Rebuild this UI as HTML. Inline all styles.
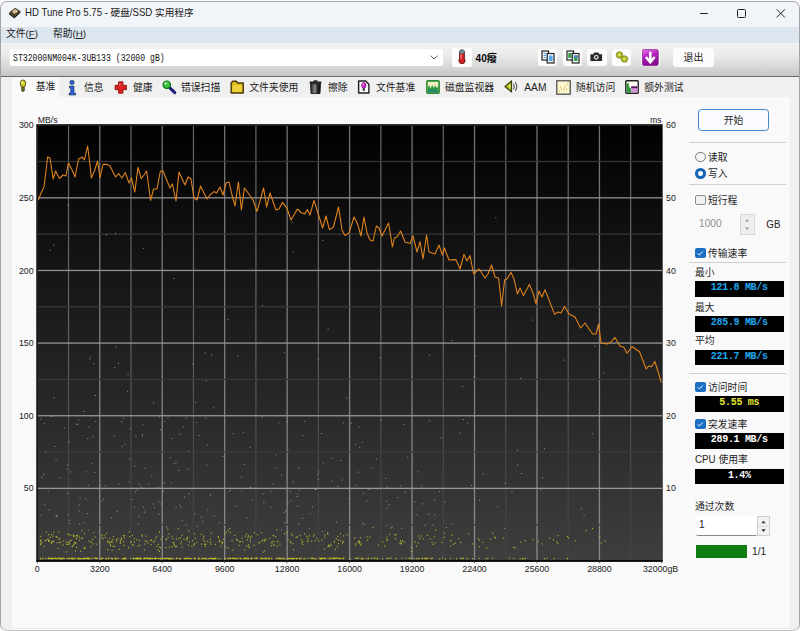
<!DOCTYPE html>
<html lang="zh-CN">
<head>
<meta charset="utf-8">
<title>HD Tune Pro 5.75 - 硬盘/SSD 实用程序</title>
<style>
html,body{margin:0;padding:0;}
body{width:800px;height:631px;overflow:hidden;background:#fdfdfd;position:relative;
 font-family:"Liberation Sans","Noto Sans CJK SC",sans-serif;font-size:10px;color:#1a1a1a;}
.abs{position:absolute;}
#win{position:absolute;left:0px;top:1px;width:798px;height:628px;border:1px solid #a4a4a4;border-bottom-color:#c2c2c2;border-radius:7px;overflow:hidden;background:#f0f0f0;}
#titlebar{position:absolute;left:0;top:0;width:798px;height:25px;background:#f1f4f9;}
#menubar{position:absolute;left:0;top:25px;width:798px;height:16px;background:#dde5ef;}
#toolbar{position:absolute;left:0;top:41px;width:798px;height:33px;background:linear-gradient(#f2f2f3 0%,#ebebec 35%,#d6d6d6 75%,#c4c4c4 100%);}
#tbline{position:absolute;left:0;top:73.6px;width:798px;height:1.300px;background:#6c6c6c;}
#tabarea{position:absolute;left:0;top:75px;width:798px;height:552px;background:#f0f0f0;}
#page{position:absolute;left:11px;top:95px;width:778px;height:531px;background:#f9f9fa;border-bottom:1px solid #e9e9e9;}
#pgb{position:absolute;left:11px;top:627px;width:778px;height:2px;background:#fbfbfb;}
#tabstrip{position:absolute;left:11px;top:78px;width:778px;height:18px;background:#f0f0f0;}
#seltab{position:absolute;left:11px;top:75.5px;width:47px;height:21px;background:#f9f9fa;}
.t{position:absolute;white-space:nowrap;line-height:12px;height:12px;}
.title{font-size:9.65px;left:25px;top:6.5px;color:#1b1b1b;}
.menu{font-size:9.750px;top:28px;}
.tab{font-size:9.8px;top:82px;color:#222;}
.lbl{font-size:9.8px;color:#1f1f1f;margin-top:0.6px;}
.lat{display:inline-block;transform:scaleY(1.16);transform-origin:50% 78%;}
.btn{position:absolute;background:#fcfcfd;border-radius:2.5px;}
.sep{position:absolute;left:689px;width:97px;height:1px;background:#cfcfcf;}
.blk{position:absolute;left:695px;width:88.5px;height:15.5px;background:#000;color:#fff;text-align:center;
 font-family:"Liberation Mono","Noto Sans CJK SC",monospace;font-weight:bold;font-size:10px;letter-spacing:-0.32px;line-height:13px;white-space:pre;}
.cb{position:absolute;left:695px;width:10.500px;height:10.200px;border-radius:2px;box-sizing:border-box;}
.cb.on{background:#1b6ec2;}
.cb.off{border:1px solid #8c8c8c;background:#f1f1f1;}
.rad{position:absolute;left:695px;width:10.700px;height:10.700px;margin-top:-0.300px;border-radius:50%;box-sizing:border-box;}
</style>
</head>
<body>
<div id="win">
  <div id="titlebar"></div>
  <div id="menubar"></div>
  <div id="toolbar"></div>
  <div id="tbline"></div>
  <div id="tabarea"></div>
  <div id="tabstrip"></div>
  <div id="seltab"></div>
  <div id="page"></div>
  <div id="pgb"></div>
</div>

<!-- title -->
<svg class="abs" style="left:7.500px;top:6.500px" width="13.500" height="12" viewBox="0 0 15 14">
  <polygon points="1,6.500 8,0.800 14,4.800 7,11.500" fill="#4a3c26"/>
  <polygon points="1,6.500 7,11.500 7,13.500 1,8.500" fill="#16120c"/>
  <polygon points="7,11.500 14,4.800 14,6.800 7,13.500" fill="#0c0a06"/>
  <polygon points="4,5.800 8.200,2.200 11.800,4.600 7.400,8.600" fill="#b49a6a"/>
  <ellipse cx="7.800" cy="4.900" rx="2.300" ry="1.900" fill="#f0dfb8"/>
  <circle cx="7.800" cy="4.900" r="0.700" fill="#6b5a3a"/>
</svg>
<div class="t title"><span class="lat">HD Tune Pro 5.75 -</span> 硬盘<span class="lat">/SSD</span> 实用程序</div>
<svg class="abs" style="left:690px;top:2px" width="108" height="24" viewBox="0 0 108 24" fill="none" stroke="#222" stroke-width="1">
  <path d="M10 11.5h7.800"/>
  <rect x="47.5" y="7.5" width="8" height="8" rx="1"/>
  <path d="M86.7 7.3l8.2 8.2M94.9 7.3l-8.2 8.2"/>
</svg>

<!-- menu -->
<div class="t menu" style="left:6px">文件(<u>F</u>)</div>
<div class="t menu" style="left:53px">帮助(<u>H</u>)</div>

<!-- toolbar -->
<div class="btn" style="left:10px;top:49px;width:433px;height:17px;background:#fff;border-radius:2px;"></div>
<div class="t" style="left:13px;top:51.5px;font-family:'Liberation Mono','Noto Sans CJK SC',monospace;font-size:10.4px;transform:scaleX(0.785);transform-origin:0 0;color:#111;">ST32000NM004K-3UB133 (32000 gB)</div>
<svg class="abs" style="left:429.3px;top:54px" width="10" height="7" viewBox="0 0 10 7"><path d="M1.5 1.5l3.5 3.5 3.5-3.5" fill="none" stroke="#666" stroke-width="1"/></svg>

<div class="btn" style="left:451.8px;top:47.5px;width:20.5px;height:19px;"></div>
<svg class="abs" style="left:455.5px;top:49px" width="12" height="16" viewBox="0 0 12 16">
  <rect x="3.6" y="1" width="4.8" height="10" rx="2.2" fill="#d42020" stroke="#5a1414" stroke-width="0.9"/>
  <circle cx="6" cy="11.6" r="3.1" fill="#d42020" stroke="#5a1414" stroke-width="0.9"/>
  <rect x="4.6" y="2" width="2.8" height="9" fill="#d42020"/>
  <rect x="4.6" y="2" width="1.1" height="8" fill="#f08a8a"/>
  <path d="M3.600 4.200v-1.200a2.400 2.200 0 0 1 4.800 0v1.200z" fill="#6f98a4" stroke="#3a4a50" stroke-width="0.600"/>
</svg>
<div class="t" style="left:475.600px;top:52.600px;font-size:10.100px;font-weight:bold;color:#0a0a0a;">40癈</div>

<div class="btn" style="left:537.5px;top:48.5px;width:19.5px;height:17px;"></div>
<div class="btn" style="left:562.5px;top:48.5px;width:19.5px;height:17px;"></div>
<div class="btn" style="left:587px;top:48.5px;width:19.5px;height:17px;"></div>
<div class="btn" style="left:611.5px;top:48.5px;width:19.5px;height:17px;"></div>
<div class="btn" style="left:640.5px;top:48.5px;width:19.5px;height:17px;"></div>
<!-- copy icons -->
<svg class="abs" style="left:540.500px;top:49.500px" width="14" height="14" viewBox="0 0 14 14">
  <rect x="1" y="1" width="6.500" height="9" fill="#f4f8ff" stroke="#222" stroke-width="1.200"/>
  <rect x="6.200" y="3.500" width="6.800" height="9.500" fill="#f4f8ff" stroke="#222" stroke-width="1.200"/>
  <path d="M2.500 3.500h3M2.500 5.500h3M2.500 7.500h3" stroke="#5aa0e6" stroke-width="1"/>
  <rect x="7.800" y="5.500" width="3.800" height="5.500" fill="#5aa6ee"/>
</svg>
<svg class="abs" style="left:565.500px;top:49.500px" width="14" height="14" viewBox="0 0 14 14">
  <rect x="1" y="1" width="6.500" height="9" fill="#f4f8ff" stroke="#222" stroke-width="1.200"/>
  <rect x="6.200" y="3.500" width="6.800" height="9.500" fill="#f4f8ff" stroke="#222" stroke-width="1.200"/>
  <rect x="2.300" y="3" width="3.200" height="5" fill="#3c9a4a"/>
  <rect x="7.800" y="5.500" width="3.800" height="5.500" fill="#3ca04a"/>
  <rect x="7.800" y="5.500" width="3.800" height="2" fill="#4a80d8"/>
</svg>
<svg class="abs" style="left:590.300px;top:52px" width="12.500" height="9.200" viewBox="0 0 15 11">
  <path d="M0.500 2.800h3.300l1.200-2.200h5l1.200 2.200h3.300v8h-14z" fill="#2a2a2a"/>
  <circle cx="7.500" cy="6.400" r="2.800" fill="#f4f4f4"/>
  <circle cx="7.500" cy="6.400" r="1.500" fill="#3a3a3a"/>
</svg>
<svg class="abs" style="left:615px;top:50.500px" width="14" height="12" viewBox="0 0 14 12">
  <path d="M1.500 3.200l2.200-2 8.800 7.800-2.200 2z" fill="#a4b41c"/>
  <circle cx="4.500" cy="4" r="3.300" fill="#a8b820" stroke="#6a7410" stroke-width="0.600"/>
  <circle cx="9.500" cy="8" r="3.300" fill="#a8b820" stroke="#6a7410" stroke-width="0.600"/>
  <circle cx="4.300" cy="3.800" r="1.500" fill="#d6e06a"/>
  <circle cx="9.300" cy="7.800" r="1.500" fill="#d6e06a"/>
</svg>
<svg class="abs" style="left:642px;top:48.700px" width="16.600" height="16.900" viewBox="0 0 16 16">
  <defs><linearGradient id="pg" x1="0" y1="0" x2="0.300" y2="1"><stop offset="0" stop-color="#e27ae6"/><stop offset="0.450" stop-color="#b822c0"/><stop offset="1" stop-color="#860a8e"/></linearGradient></defs>
  <rect x="0.300" y="0.300" width="15.400" height="15.400" rx="1.600" fill="url(#pg)" stroke="#7a0a82" stroke-width="0.600"/>
  <path d="M8 2.600v8M3.800 7.600L8 12.600l4.200-5" fill="none" stroke="#fff" stroke-width="2.500"/>
</svg>
<div class="btn" style="left:673px;top:48px;width:41px;height:18.5px;border-radius:3px;"></div>
<div class="t" style="left:673px;width:41px;text-align:center;top:52.3px;font-size:10px;">退出</div>

<!-- tabs -->
<!-- bulb -->
<svg class="abs" style="left:17.5px;top:79px" width="10" height="15" viewBox="0 0 10 15">
  <ellipse cx="5" cy="4.6" rx="2.7" ry="3.7" fill="#cfd024" stroke="#4a4a10" stroke-width="0.9"/>
  <ellipse cx="4.3" cy="3.6" rx="0.9" ry="1.5" fill="#f6f6a0"/>
  <path d="M3.6 8.300h2.800v3.500l-1.400 1-1.400-1z" fill="#6a6a20" stroke="#33330c" stroke-width="0.6"/>
</svg>
<div class="t tab" style="left:35.700px;top:80.600px">基准</div>
<!-- info -->
<svg class="abs" style="left:66px;top:79.3px" width="12" height="18" viewBox="0 0 12 18">
  <circle cx="6" cy="3.4" r="2.2" fill="#2a62d8" stroke="#123" stroke-width="0.5"/>
  <path d="M3.4 7h4.6v7h1.6v2H3v-2h1.6V9H3.4z" fill="#2a62d8" stroke="#123" stroke-width="0.5"/>
</svg>
<div class="t tab" style="left:84px">信息</div>
<!-- health -->
<svg class="abs" style="left:113.5px;top:81px" width="13.5" height="13" viewBox="0 0 15 15">
  <path d="M5 1h5v4h4v5h-4v4H5v-4H1V5h4z" fill="#e01f1f" stroke="#8a0c0c" stroke-width="1"/>
  <path d="M5.800 2h1.400v3.800H2V5.800h3.800z" fill="#f28a8a" opacity="0.7"/>
</svg>
<div class="t tab" style="left:133px">健康</div>
<!-- error scan -->
<svg class="abs" style="left:161px;top:79px" width="17" height="16" viewBox="0 0 17 16">
  <path d="M8.600 8.600l5.200 5" stroke="#1c1c78" stroke-width="3" stroke-linecap="round"/>
  <circle cx="5.800" cy="5.700" r="3.700" fill="#38c43c" stroke="#176a1a" stroke-width="1.200"/>
  <circle cx="4.700" cy="4.500" r="1.200" fill="#c8f6c8"/>
</svg>
<div class="t tab" style="left:181px">错误扫描</div>
<!-- folder -->
<svg class="abs" style="left:230px;top:80px" width="14.5" height="14.500" viewBox="0 0 15 15">
  <path d="M1.200 3l1.600-1.800h3.800l1.300 1.800h5.800v10.500h-12.500z" fill="#dcbc1c" stroke="#4a3c08" stroke-width="1.500" stroke-linejoin="round"/>
  <path d="M2.600 5.200h9.800v7H2.600z" fill="#eed23c"/>
</svg>
<div class="t tab" style="left:249.300px">文件夹使用</div>
<!-- erase -->
<svg class="abs" style="left:309px;top:80px" width="13" height="14" viewBox="0 0 13 14">
  <defs><linearGradient id="tr" x1="0" y1="0" x2="1" y2="0"><stop offset="0" stop-color="#1c1c1c"/><stop offset="0.45" stop-color="#8c8c8c"/><stop offset="0.7" stop-color="#2a2a2a"/><stop offset="1" stop-color="#111"/></linearGradient></defs>
  <path d="M1.500 3.800h10l-0.500 9.700h-9z" fill="url(#tr)" stroke="#111" stroke-width="0.800"/>
  <rect x="0.600" y="1.500" width="11.800" height="2.300" rx="0.600" fill="#222"/>
  <rect x="4.500" y="0.300" width="4" height="1.600" fill="#222"/>
</svg>
<div class="t tab" style="left:328px">擦除</div>
<!-- file benchmark -->
<svg class="abs" style="left:357px;top:80px" width="13.500" height="14" viewBox="0 0 14 15">
  <path d="M1.500 1h7.500l3.500 3.500v9.500h-11z" fill="#fafafa" stroke="#1c1c1c" stroke-width="1.500" stroke-linejoin="round"/>
  <ellipse cx="7" cy="5.800" rx="2.400" ry="3" fill="#d42ad4" stroke="#5a0a5a" stroke-width="0.600"/>
  <ellipse cx="6.300" cy="4.800" rx="0.800" ry="1.100" fill="#f6a6f6"/>
  <rect x="5.900" y="8.800" width="2.200" height="2.800" fill="#333"/>
</svg>
<div class="t tab" style="left:376px">文件基准</div>
<!-- disk monitor -->
<svg class="abs" style="left:426px;top:80px" width="14" height="14" viewBox="0 0 14 14">
  <rect x="0.900" y="0.900" width="12.200" height="12.200" rx="0.800" fill="#f1edc4" stroke="#2a8a2c" stroke-width="1.600"/>
  <path d="M1.800 12.300V7.500l1.500-2 1.400 3 1.500-3.500 1.500 3 1.500-2.500 1.500 2.500 1.500-1.500v5.800z" fill="#2a9a44"/>
  <path d="M1.800 12.300v-2.300h10.400v2.300z" fill="#1f7a8a" opacity="0.600"/>
</svg>
<div class="t tab" style="left:445px">磁盘监视器</div>
<!-- AAM -->
<svg class="abs" style="left:504px;top:80px" width="15" height="13" viewBox="0 0 15 13">
  <path d="M1 6.500L7.500 1v11z" fill="#b4c01c" stroke="#3c400a" stroke-width="1.200" stroke-linejoin="round"/>
  <path d="M4.200 6.300l2.300-2v4z" fill="#e6ee70"/>
  <path d="M9.300 3.800q2 2.700 0 5.400M11.200 2.200q3.200 4.300 0 8.600" fill="none" stroke="#666" stroke-width="1.200"/>
</svg>
<div class="t tab" style="left:524.3px;font-size:10.2px;"><span class="lat">AAM</span></div>
<!-- random access -->
<svg class="abs" style="left:556px;top:80px" width="15" height="15" viewBox="0 0 15 15">
  <rect x="0.8" y="0.8" width="13.4" height="13.4" fill="#fbf6d0" stroke="#333" stroke-width="1.1"/>
  <path d="M3 11h1M5 9h1M7 10h1M9 6h1M11 4h1M4 7h1M8 8h1M10 9h1" stroke="#d6a820" stroke-width="1.2"/>
</svg>
<div class="t tab" style="left:576px">随机访问</div>
<!-- extra tests -->
<svg class="abs" style="left:625px;top:80px" width="14" height="14" viewBox="0 0 14 14">
  <rect x="0.800" y="0.800" width="12.400" height="12.400" rx="0.800" fill="#fdfdf6" stroke="#222" stroke-width="1.400"/>
  <path d="M1.600 12.400V3.200h2.400q-0.500 4.500 2.200 5.500v3.700z" fill="#2f9a3a"/>
  <rect x="6.200" y="6.400" width="6.200" height="6" fill="#d890d8"/>
  <rect x="6.200" y="6.400" width="6.200" height="1.800" fill="#4a1a5a"/>
</svg>
<div class="t tab" style="left:644.3px">额外测试</div>

<svg id="chart" width="800" height="631" viewBox="0 0 800 631" style="position:absolute;left:0;top:0">
<defs><linearGradient id="bg" x1="0" y1="0" x2="0" y2="1"><stop offset="0" stop-color="#010101"/><stop offset="1" stop-color="#3e3e3e"/></linearGradient><linearGradient id="gmaj" gradientUnits="userSpaceOnUse" x1="0" y1="126" x2="0" y2="561"><stop offset="0" stop-color="#707070"/><stop offset="1" stop-color="#8a8a8a"/></linearGradient><linearGradient id="gmin" gradientUnits="userSpaceOnUse" x1="0" y1="126" x2="0" y2="561"><stop offset="0" stop-color="#666666"/><stop offset="0.45" stop-color="#646464"/><stop offset="0.78" stop-color="#464646"/><stop offset="1" stop-color="#414141"/></linearGradient></defs>
<rect x="36.2" y="124.1" width="626.5" height="437.6" fill="#1e1e1e"/>
<rect x="36.2" y="560.1" width="626.5" height="1.6" fill="#000"/>
<rect x="38.1" y="126.0" width="623.9" height="434.1" fill="url(#bg)"/>
<rect x="67.93" y="126.0" width="1.2" height="434.1" fill="url(#gmin)"/>
<rect x="99.11" y="126.0" width="1.3" height="434.1" fill="url(#gmaj)"/>
<rect x="130.39" y="126.0" width="1.2" height="434.1" fill="url(#gmin)"/>
<rect x="161.57" y="126.0" width="1.3" height="434.1" fill="url(#gmaj)"/>
<rect x="192.85" y="126.0" width="1.2" height="434.1" fill="url(#gmin)"/>
<rect x="224.03" y="126.0" width="1.3" height="434.1" fill="url(#gmaj)"/>
<rect x="255.31" y="126.0" width="1.2" height="434.1" fill="url(#gmin)"/>
<rect x="286.49" y="126.0" width="1.3" height="434.1" fill="url(#gmaj)"/>
<rect x="317.77" y="126.0" width="1.2" height="434.1" fill="url(#gmin)"/>
<rect x="348.95" y="126.0" width="1.3" height="434.1" fill="url(#gmaj)"/>
<rect x="380.23" y="126.0" width="1.2" height="434.1" fill="url(#gmin)"/>
<rect x="411.41" y="126.0" width="1.3" height="434.1" fill="url(#gmaj)"/>
<rect x="442.69" y="126.0" width="1.2" height="434.1" fill="url(#gmin)"/>
<rect x="473.87" y="126.0" width="1.3" height="434.1" fill="url(#gmaj)"/>
<rect x="505.15" y="126.0" width="1.2" height="434.1" fill="url(#gmin)"/>
<rect x="536.33" y="126.0" width="1.3" height="434.1" fill="url(#gmaj)"/>
<rect x="567.61" y="126.0" width="1.2" height="434.1" fill="url(#gmin)"/>
<rect x="598.79" y="126.0" width="1.3" height="434.1" fill="url(#gmaj)"/>
<rect x="630.07" y="126.0" width="1.2" height="434.1" fill="url(#gmin)"/>
<rect x="38.1" y="160.87" width="623.9" height="1.3" fill="rgb(52,52,52)"/>
<rect x="38.1" y="197.18" width="623.9" height="1.3" fill="rgb(144,144,144)"/>
<rect x="38.1" y="233.50" width="623.9" height="1.3" fill="rgb(54,54,54)"/>
<rect x="38.1" y="269.82" width="623.9" height="1.3" fill="rgb(146,146,146)"/>
<rect x="38.1" y="306.13" width="623.9" height="1.3" fill="rgb(55,55,55)"/>
<rect x="38.1" y="342.45" width="623.9" height="1.3" fill="rgb(148,148,148)"/>
<rect x="38.1" y="378.77" width="623.9" height="1.3" fill="rgb(57,57,57)"/>
<rect x="38.1" y="415.08" width="623.9" height="1.3" fill="rgb(150,150,150)"/>
<rect x="38.1" y="451.40" width="623.9" height="1.3" fill="rgb(58,58,58)"/>
<rect x="38.1" y="487.72" width="623.9" height="1.3" fill="rgb(152,152,152)"/>
<rect x="38.1" y="524.03" width="623.9" height="1.3" fill="rgb(60,60,60)"/>
<path d="M37.3 561.6v1.6M99.8 561.6v1.6M162.2 561.6v1.6M224.7 561.6v1.6M287.1 561.6v1.6M349.6 561.6v1.6M412.1 561.6v1.6M474.5 561.6v1.6M537.0 561.6v1.6M599.4 561.6v1.6M661.9 561.6v1.6" stroke="#555" stroke-width="0.9" fill="none"/>
<path d="M281.2 558.8h1M288.2 558.6h1M138.2 558.6h1M463.0 558.3h1M88.0 558.7h1M368.3 558.1h1M321.7 558.3h1M168.8 558.5h1M283.8 558.9h1M417.6 558.3h1M193.9 558.7h1M492.0 558.3h1M78.6 558.7h1M183.7 558.4h1M102.6 558.2h1M71.6 558.2h1M338.2 558.3h1M430.4 558.6h1M101.8 558.3h1M382.3 558.9h1M153.5 558.7h1M215.3 558.2h1M87.7 558.3h1M360.7 558.5h1M137.2 558.8h1M140.9 558.9h1M264.6 558.1h1M415.8 558.8h1M358.1 558.2h1M424.2 558.3h1M367.6 558.8h1M148.5 558.3h1M277.6 558.2h1M236.5 558.2h1M114.5 558.1h1M553.7 558.6h1M79.8 558.7h1M243.8 558.6h1M82.4 558.9h1M349.8 558.8h1M84.3 558.1h1M162.5 558.5h1M176.2 558.3h1M401.7 558.2h1M214.2 558.3h1M244.9 558.4h1M112.3 558.8h1M129.9 558.3h1M153.9 558.6h1M303.3 558.8h1M79.5 558.8h1M61.8 558.6h1M49.8 558.5h1M52.8 558.3h1M114.8 558.6h1M146.0 558.2h1M45.3 558.7h1M135.2 558.4h1M523.5 558.8h1M425.3 558.5h1M240.8 558.8h1M149.0 558.8h1M83.8 558.5h1M54.8 558.2h1M466.7 558.4h1M460.3 558.2h1M546.4 558.3h1M320.8 558.7h1M206.0 558.8h1M146.9 558.5h1M362.8 558.9h1M315.1 558.7h1M408.6 558.5h1M292.3 558.4h1M294.1 558.3h1M108.7 558.1h1M143.2 558.6h1M211.6 558.6h1M95.6 558.2h1M312.2 558.3h1M322.8 558.4h1M260.3 558.2h1M148.7 558.6h1M163.8 558.7h1M513.5 558.3h1M427.6 558.2h1M461.4 558.4h1M405.5 558.3h1M140.5 558.2h1M59.6 558.5h1M343.3 558.2h1M90.5 558.9h1M214.1 558.5h1M269.3 558.1h1M136.4 558.7h1M256.0 558.2h1M313.3 558.8h1M255.6 558.5h1M425.5 558.4h1M289.9 558.4h1M395.3 558.6h1M51.8 558.7h1M176.6 558.1h1M144.0 558.2h1M471.9 558.6h1M445.0 558.8h1M125.0 558.2h1M70.9 558.4h1M234.8 558.6h1M339.0 558.7h1M197.7 558.3h1M62.4 558.7h1M439.2 558.9h1M543.9 558.8h1M269.0 558.9h1M169.7 558.8h1M361.9 558.6h1M282.9 558.1h1M321.6 558.5h1M179.6 558.4h1M431.7 558.2h1M373.3 558.3h1M441.9 558.3h1M508.8 558.1h1M184.3 558.6h1M94.3 558.2h1M85.8 558.5h1M376.6 558.5h1M152.1 558.7h1M487.4 558.2h1M450.1 558.4h1M236.6 558.9h1M213.4 558.7h1M236.8 558.8h1M81.5 558.6h1M80.2 558.6h1M83.2 558.7h1M410.2 558.2h1M235.2 558.7h1M202.3 558.4h1M172.2 558.4h1M233.6 558.4h1M143.7 558.7h1M340.1 558.7h1M51.5 558.5h1M73.8 558.7h1M84.5 558.7h1M519.7 558.6h1M116.4 558.6h1M170.7 558.7h1M250.2 558.9h1M264.7 558.2h1M240.1 558.3h1M266.5 558.9h1M71.2 558.2h1M135.4 558.5h1M59.0 558.2h1M155.7 558.7h1M357.2 558.2h1M189.7 558.7h1M206.1 558.8h1M295.6 558.8h1M297.3 558.1h1M245.2 558.5h1M390.7 558.1h1M292.0 558.7h1M123.6 558.4h1M325.0 558.7h1M40.3 558.8h1M478.6 558.3h1M422.2 558.5h1M88.2 558.3h1M123.7 558.3h1M205.5 558.3h1M96.1 558.5h1M388.8 558.4h1M418.7 558.6h1M284.2 558.9h1M466.5 558.6h1M194.7 558.5h1M198.8 558.4h1M395.6 558.3h1M426.1 558.8h1M88.9 558.2h1M135.6 558.8h1M356.1 558.3h1M123.5 558.4h1M78.4 558.4h1M245.7 558.4h1M47.8 558.7h1M49.5 558.4h1M387.1 558.4h1M124.2 558.8h1M332.4 558.5h1M115.3 558.9h1M485.7 558.9h1M374.5 558.2h1M170.2 558.7h1M232.5 558.2h1M360.8 558.8h1M168.2 558.8h1M138.7 558.2h1M56.7 558.9h1M203.9 558.7h1M243.4 558.7h1M48.3 558.5h1M116.0 558.6h1M132.3 558.3h1M342.9 558.6h1M59.8 558.2h1M290.5 558.6h1M271.3 558.8h1M210.8 558.7h1M202.3 558.2h1M106.1 558.5h1M251.4 558.7h1M320.6 558.3h1M250.8 558.2h1M158.0 558.6h1M522.0 558.7h1M105.7 558.9h1M39.9 558.3h1M213.0 558.8h1M230.0 558.1h1M56.2 558.3h1M149.9 558.8h1M291.9 558.8h1M377.3 558.8h1M66.3 558.7h1M111.6 558.9h1M277.3 558.3h1M203.6 558.3h1M136.3 558.6h1M354.6 558.3h1M187.4 558.2h1M63.8 558.3h1M86.1 558.7h1M170.9 558.5h1M567.0 558.5h1M135.7 558.6h1M231.6 558.7h1M315.5 558.8h1M455.9 558.6h1M165.3 558.7h1M165.6 558.3h1M58.5 558.7h1M135.7 558.1h1M304.5 558.5h1M78.3 558.6h1M166.7 558.3h1M62.2 558.6h1M320.2 558.6h1M86.8 558.2h1M175.7 558.7h1M72.2 558.4h1M62.1 558.7h1M60.5 558.8h1M115.2 558.3h1M266.2 558.1h1M431.6 558.3h1M334.3 558.5h1M365.8 558.4h1M386.6 558.4h1M286.6 558.8h1M154.6 558.2h1M333.0 558.3h1M154.1 558.3h1M148.8 558.2h1M408.8 558.3h1M49.5 558.3h1M421.5 558.4h1M50.5 558.4h1M84.0 558.4h1M68.9 558.3h1M61.4 558.6h1M56.6 558.4h1M330.1 558.7h1M178.6 558.6h1M118.2 558.3h1M160.3 558.4h1M154.8 558.1h1M198.8 558.8h1M155.0 558.6h1M164.9 558.2h1M268.0 558.1h1M244.3 558.5h1M189.0 558.4h1M293.4 558.6h1M167.7 558.4h1M265.1 558.6h1M413.5 558.4h1M234.1 558.4h1M68.8 558.6h1M290.0 558.3h1M52.2 558.8h1M341.7 558.6h1M138.9 558.6h1M371.1 558.4h1M525.3 558.2h1M310.4 558.4h1M332.7 558.2h1M97.3 558.3h1M243.7 558.3h1M39.9 558.5h1M157.8 558.3h1M187.7 558.6h1M204.0 558.6h1M207.8 558.8h1M330.2 558.4h1M143.6 558.8h1M133.6 558.7h1M248.2 558.6h1M328.8 558.8h1M87.4 558.6h1M186.8 558.6h1M150.5 558.3h1M264.3 558.5h1M110.7 558.3h1M137.1 558.2h1M193.7 558.2h1M58.6 558.2h1M70.3 558.7h1M73.4 558.5h1M271.2 558.5h1M88.4 558.8h1M300.5 558.1h1M115.8 558.5h1M278.5 558.4h1M254.4 558.3h1M254.3 558.4h1M139.8 558.7h1M292.4 558.8h1M209.8 558.4h1M251.7 558.6h1M288.9 558.7h1M77.2 558.4h1M240.4 558.3h1M95.0 558.1h1M215.3 558.9h1M330.7 558.2h1M245.9 558.4h1M229.0 558.4h1M319.6 558.9h1M54.2 558.7h1M75.1 558.1h1M125.4 558.7h1M337.7 558.2h1M138.6 558.1h1M202.4 558.5h1M151.6 558.3h1M279.7 558.8h1M124.7 558.4h1M224.9 558.7h1M333.9 558.4h1M247.8 558.5h1M279.7 558.2h1M92.1 558.2h1M319.7 558.3h1M186.1 558.2h1M136.7 558.1h1M209.4 558.2h1M227.2 558.3h1M107.9 558.5h1M149.4 558.3h1M55.0 558.2h1M307.4 558.3h1M63.1 558.2h1M184.6 558.9h1M100.3 558.8h1M184.9 558.4h1M281.7 558.4h1M56.9 558.5h1M236.7 558.6h1M122.7 558.9h1M299.0 558.9h1M172.6 558.8h1M257.1 558.2h1M47.6 558.2h1M75.2 558.2h1M147.3 558.7h1M132.6 558.5h1M42.7 558.3h1M327.4 558.1h1M197.8 558.7h1M277.3 558.7h1M159.4 558.7h1M287.9 558.7h1M335.4 558.2h1M324.7 558.4h1M251.2 558.3h1M312.5 558.1h1M212.6 558.3h1M156.1 558.4h1M236.7 558.7h1M149.0 558.6h1M145.8 558.3h1M311.1 558.4h1M67.8 558.4h1M262.1 558.3h1M262.6 558.5h1M243.7 558.2h1M71.3 558.2h1M144.7 558.4h1M42.4 558.5h1M160.6 558.4h1M200.7 558.9h1M101.0 558.8h1M135.9 558.7h1M72.1 558.9h1M168.6 558.9h1M105.5 558.4h1M251.4 558.2h1M121.6 558.6h1M323.9 558.4h1M94.6 558.4h1M336.4 558.2h1M230.0 558.4h1M232.8 558.3h1M224.5 558.8h1M296.5 558.6h1M191.1 558.6h1M73.8 558.8h1M246.6 558.5h1M239.2 558.4h1M155.0 558.3h1M219.8 558.6h1M194.2 558.1h1M227.8 558.5h1M217.6 558.6h1M319.1 558.2h1M180.2 558.9h1M261.0 558.4h1M260.6 558.9h1M160.2 558.8h1M77.6 558.9h1M186.9 558.3h1M291.7 558.6h1M320.9 558.8h1M278.9 558.5h1M337.7 558.2h1M300.6 558.7h1M114.8 558.7h1M175.8 558.5h1M299.3 558.3h1M123.5 558.6h1M61.7 558.5h1M275.7 558.5h1M112.1 558.7h1M296.1 558.7h1M204.4 558.8h1" stroke="#d8d824" stroke-width="1.3" fill="none" opacity="0.85"/>
<path d="M489.8 539.1h1M60.4 542.1h1M105.9 533.7h1M156.4 546.3h1M150.9 539.8h1M231.5 540.8h1M395.4 534.8h1M141.7 536.2h1M112.5 546.4h1M241.6 538.2h1M214.9 544.4h1M270.7 545.7h1M172.4 538.5h1M293.0 549.6h1M276.4 529.8h1M205.1 544.6h1M419.3 538.4h1M277.3 541.8h1M95.8 544.2h1M417.7 542.8h1M52.7 536.2h1M302.2 541.3h1M77.2 535.0h1M157.9 544.4h1M120.4 540.4h1M133.9 538.6h1M107.2 549.6h1M53.3 541.4h1M102.4 538.8h1M110.0 545.7h1M112.9 536.7h1M478.9 540.2h1M273.5 541.5h1M354.9 545.4h1M520.3 542.1h1M269.2 538.3h1M273.2 545.3h1M128.1 547.5h1M55.7 536.7h1M65.6 551.9h1M83.9 548.4h1M225.4 547.2h1M262.5 540.3h1M247.4 537.0h1M309.0 535.9h1M67.6 542.6h1M74.5 536.1h1M165.4 539.1h1M249.7 537.2h1M44.7 540.8h1M585.6 530.7h1M246.2 534.0h1M248.0 535.8h1M217.7 536.6h1M69.6 540.5h1M201.1 544.2h1M71.7 546.7h1M400.5 542.4h1M367.2 540.1h1M557.6 535.7h1M292.5 543.5h1M454.7 543.2h1M105.1 537.6h1M103.6 535.5h1M158.9 531.9h1M109.3 538.5h1M306.5 536.4h1M99.1 542.4h1M133.7 541.8h1M132.2 544.6h1M259.1 542.9h1M433.7 536.9h1M187.2 537.3h1M75.9 538.9h1M314.7 540.5h1M59.4 538.4h1M227.8 548.0h1M494.9 538.1h1M482.6 542.3h1M384.2 545.9h1M450.3 540.5h1M343.1 541.4h1M205.2 544.1h1M193.6 544.4h1M196.4 542.4h1M477.6 538.6h1M70.3 535.2h1M171.5 546.6h1M359.4 541.8h1M410.9 551.7h1M549.1 538.4h1M532.4 539.6h1M416.1 546.4h1M334.1 541.6h1M337.4 536.3h1M321.5 539.8h1M314.1 534.6h1M115.8 541.0h1M51.0 534.6h1M566.9 536.7h1M57.6 548.4h1M53.2 532.0h1M40.0 543.9h1M229.2 528.5h1M48.0 540.0h1M336.9 546.6h1M138.9 540.4h1M174.2 545.8h1M186.6 540.2h1M143.9 549.9h1M209.9 539.5h1M84.0 533.7h1M177.7 528.5h1M249.1 547.6h1M258.4 542.5h1M254.0 532.7h1M47.4 539.3h1M556.3 541.7h1M119.7 543.3h1M116.3 539.5h1M250.0 538.9h1M80.1 551.3h1M236.0 539.5h1M109.0 543.2h1M574.7 540.8h1M130.2 542.3h1M360.8 543.8h1M592.1 528.6h1M68.9 544.0h1M159.2 547.2h1M302.4 544.4h1M63.1 540.9h1M389.2 534.2h1M218.8 541.6h1M275.2 536.5h1M537.9 541.5h1M202.7 539.9h1M369.4 537.2h1M94.4 537.1h1M330.1 545.3h1M40.5 539.8h1M90.4 546.5h1M289.8 541.5h1M324.3 537.3h1M316.4 538.3h1M323.8 549.0h1M150.6 544.7h1M492.3 533.3h1M52.5 536.0h1M76.0 547.3h1M144.6 541.2h1M391.5 527.2h1M450.2 545.8h1M256.8 534.7h1M52.5 541.4h1M218.1 537.3h1M145.4 536.2h1M227.9 530.4h1M334.9 549.4h1M342.1 542.5h1M460.3 542.4h1M176.0 546.3h1M79.1 537.0h1M273.7 544.9h1M172.6 542.8h1M337.8 539.9h1M472.4 543.9h1M193.6 545.2h1M450.2 541.2h1M284.0 533.9h1M541.6 543.8h1M111.8 542.1h1M65.8 541.6h1M307.2 541.6h1M80.8 538.4h1M107.4 540.9h1M327.1 532.8h1M246.3 546.2h1M295.6 537.1h1M296.8 537.2h1M458.2 538.7h1M167.3 529.4h1M49.1 540.9h1M386.3 537.0h1M73.4 544.3h1M260.7 532.6h1M181.7 535.2h1M194.7 538.3h1M338.1 543.7h1M276.9 546.1h1M82.2 538.0h1M194.2 533.9h1M343.2 535.8h1M123.6 545.3h1M180.7 541.9h1M189.0 541.8h1M432.5 544.3h1M159.0 532.2h1M434.7 542.8h1M307.4 538.3h1M165.4 547.5h1M232.4 550.1h1M136.4 539.6h1M167.6 537.4h1M168.9 547.3h1M75.0 542.6h1M93.4 532.5h1M75.0 551.1h1M51.4 542.1h1M221.8 543.8h1M202.9 537.8h1M180.2 543.9h1M187.0 538.2h1M191.4 546.2h1M328.8 546.3h1M273.0 535.5h1M324.4 534.9h1M166.1 539.5h1M209.7 542.3h1M200.9 534.4h1M264.1 550.9h1M81.6 530.8h1M330.5 544.1h1M599.2 536.3h1M600.8 543.2h1M400.9 544.2h1M137.5 546.1h1M162.1 536.5h1M346.7 534.8h1M49.7 537.4h1M410.6 547.5h1M355.3 543.9h1M399.4 543.4h1M468.1 533.7h1M58.9 542.5h1M56.5 542.9h1M221.1 541.9h1M568.1 537.9h1M357.8 542.1h1M443.6 537.4h1M175.2 546.5h1M76.8 537.1h1M173.6 544.5h1M394.4 534.6h1M72.9 536.3h1M67.1 544.3h1M226.1 532.0h1M141.5 534.9h1M358.9 543.2h1M83.7 547.4h1M58.5 531.8h1M68.8 542.3h1M123.1 541.6h1M88.5 540.8h1M557.3 543.4h1M147.5 543.0h1M152.9 541.9h1M342.2 542.9h1M124.1 535.9h1M307.6 540.3h1M387.1 540.2h1M261.2 541.0h1M552.8 539.7h1M144.5 544.2h1M244.2 550.0h1M120.8 538.0h1M358.3 540.8h1M394.9 538.9h1M222.0 542.3h1M188.0 545.2h1M431.6 542.3h1M354.2 538.0h1M40.2 544.6h1M399.9 540.6h1M444.2 533.2h1M277.4 541.4h1M264.2 540.2h1M426.9 535.4h1M154.3 541.1h1M273.5 541.6h1M72.5 545.5h1M249.9 541.6h1M402.1 540.6h1M130.9 541.6h1M339.9 533.7h1M234.2 535.3h1M45.7 540.0h1M327.5 546.7h1M72.8 535.1h1M203.5 536.2h1M313.0 536.2h1M604.4 541.0h1M265.4 539.3h1M123.9 538.1h1M290.8 534.0h1M160.1 547.6h1M114.3 546.4h1M76.0 535.6h1M160.4 539.3h1M120.9 539.6h1M101.3 537.5h1M156.3 536.3h1M157.4 549.8h1M62.6 545.1h1M118.7 549.3h1M180.2 537.7h1M219.0 540.2h1M229.8 532.7h1M301.5 542.8h1M403.7 542.1h1M248.1 546.7h1M112.3 539.5h1M251.1 536.1h1M238.8 545.4h1M181.6 547.1h1M253.4 545.4h1M119.9 542.0h1M183.5 539.3h1M238.9 541.6h1M279.5 544.1h1M451.6 535.2h1M223.9 534.2h1M107.3 542.1h1M48.1 534.5h1M377.9 545.2h1M110.8 541.5h1M90.5 542.2h1M271.6 541.7h1M417.8 535.8h1M91.8 539.6h1M66.3 544.3h1M287.6 539.5h1M358.5 541.2h1M40.2 536.4h1M92.2 543.8h1M333.7 542.0h1M300.9 539.5h1M117.3 538.5h1M41.3 542.8h1M129.3 536.6h1M107.7 541.7h1M111.6 550.3h1M175.9 539.0h1M286.5 532.7h1M304.0 533.8h1M441.5 542.4h1M359.9 544.9h1M242.6 541.8h1M84.5 548.7h1M56.7 537.4h1M247.9 544.5h1M139.2 545.2h1M48.2 541.4h1M486.4 547.8h1M146.4 541.4h1M210.7 533.0h1M240.2 541.5h1M494.2 537.1h1M210.6 544.2h1M68.2 534.6h1M204.8 546.3h1M502.7 538.3h1M178.3 538.7h1M75.2 543.3h1M272.6 535.7h1M204.0 544.0h1M420.6 536.0h1M192.1 540.7h1M207.2 541.3h1M311.2 541.2h1M290.3 542.6h1M318.3 540.8h1M524.4 540.6h1M67.6 534.1h1M132.6 545.2h1M43.6 546.6h1M478.8 546.8h1M452.9 544.0h1M58.5 539.4h1M109.7 542.3h1M194.1 543.7h1M271.4 543.1h1M168.6 534.1h1M382.2 542.2h1M50.6 542.4h1M514.6 547.7h1M173.5 542.7h1M188.4 530.9h1M327.4 533.8h1M222.8 539.4h1M159.0 551.4h1M359.8 537.7h1M513.0 547.4h1M400.9 543.3h1M155.5 538.1h1M101.0 535.2h1M264.4 541.0h1M51.3 543.7h1M386.3 539.6h1M414.8 542.0h1M299.3 535.6h1M244.9 536.2h1M45.9 532.0h1M262.7 552.0h1M429.9 538.9h1M109.9 544.8h1M150.1 540.6h1M204.3 541.3h1M335.7 538.8h1M237.0 540.1h1M70.8 540.4h1M128.8 531.7h1M328.0 545.0h1M79.1 540.0h1M186.3 538.5h1M220.3 546.4h1M90.3 542.4h1M40.3 541.5h1M73.9 542.7h1M291.8 535.6h1M435.1 530.2h1M422.7 538.8h1M366.6 536.9h1M246.9 539.9h1M40.4 540.6h1M372.4 527.5h1M131.9 535.6h1M171.4 536.3h1M122.8 535.7h1M340.4 540.7h1" stroke="#d4d62c" stroke-width="1.25" fill="none" opacity="0.8"/>
<path d="M56.7 516.4h1M68.6 442.0h1M459.5 433.1h1M69.2 520.6h1M78.3 419.9h1M87.1 438.6h1M289.8 491.3h1M95.3 421.5h1M180.5 506.9h1M41.7 477.2h1M440.6 438.1h1M317.8 479.2h1M91.4 463.3h1M68.5 523.5h1M137.8 524.3h1M160.1 429.7h1M87.8 485.3h1M314.7 489.5h1M118.6 483.9h1M517.0 450.3h1M122.7 418.3h1M164.3 421.5h1M196.5 422.4h1M331.7 481.0h1M77.4 424.3h1M303.7 421.4h1M275.2 468.2h1M75.9 424.2h1M285.0 511.0h1M359.2 447.1h1M67.4 465.1h1M380.9 420.4h1M362.3 523.0h1M158.9 416.8h1M56.2 516.1h1M128.4 481.8h1M181.9 520.8h1M471.0 485.4h1M206.8 444.9h1M188.2 451.0h1M105.0 485.8h1M179.3 505.1h1M121.6 446.7h1M375.8 459.0h1M368.6 489.5h1M169.6 457.6h1M355.5 485.3h1M361.6 442.4h1M110.9 517.8h1M371.5 467.7h1M142.5 424.9h1M171.2 438.6h1M151.3 475.7h1M138.9 484.6h1M400.3 486.0h1M210.3 494.9h1M163.9 482.9h1M206.1 465.2h1M261.7 417.0h1M363.0 493.3h1M445.9 527.5h1M317.3 474.3h1M246.4 518.1h1M141.9 434.7h1M90.9 415.7h1M298.5 468.3h1M134.2 466.2h1M541.8 477.5h1M311.8 506.9h1M385.7 525.7h1M385.4 478.5h1M540.4 490.2h1M321.1 433.5h1M173.4 463.9h1M386.9 486.9h1M504.1 528.3h1M355.1 444.5h1M434.4 514.8h1M292.8 482.0h1M341.5 480.0h1M48.6 509.9h1M198.7 435.4h1M51.0 416.5h1M70.5 472.0h1M178.2 470.6h1M318.4 472.0h1M504.6 483.2h1M92.5 436.7h1M170.9 483.0h1M302.5 435.6h1M88.6 426.9h1M59.7 477.9h1M152.8 504.0h1M297.3 493.8h1M296.6 496.5h1M182.9 427.0h1M113.7 436.4h1M363.7 524.4h1M270.2 491.4h1M222.6 456.3h1M43.5 474.4h1M124.5 444.4h1M272.5 484.3h1M357.8 472.1h1M185.7 525.0h1M129.7 428.7h1M167.5 417.9h1M252.0 500.1h1M422.3 503.9h1M78.6 505.3h1M482.6 474.0h1M342.9 422.9h1M148.1 484.1h1M358.5 426.9h1M421.3 486.0h1M287.5 450.2h1M223.7 466.9h1M287.4 502.7h1M298.7 490.6h1M280.9 475.3h1M249.9 447.3h1M201.0 517.1h1M79.1 523.9h1M521.0 473.5h1M94.2 472.5h1M511.5 492.3h1M121.0 421.8h1M451.3 523.7h1M544.0 448.9h1M66.5 469.2h1M158.3 487.9h1M187.2 469.1h1M242.8 432.3h1M185.7 418.1h1M434.0 499.9h1M129.4 458.9h1M232.9 433.6h1M270.7 507.3h1M243.9 464.6h1M278.1 423.0h1M250.0 487.2h1M43.9 423.6h1M283.7 512.7h1M404.7 492.3h1M175.4 463.0h1M196.5 526.1h1M240.8 477.1h1M85.6 498.9h1M429.1 420.8h1M142.0 436.1h1M205.3 418.0h1M131.7 499.5h1M85.5 471.9h1M331.9 458.4h1M55.6 460.2h1M517.1 465.1h1M351.2 423.6h1M315.3 489.5h1M63.9 428.1h1M340.2 460.5h1M40.7 419.3h1M100.1 485.9h1M275.8 454.8h1M417.7 471.8h1M286.7 421.4h1M179.6 434.3h1M263.4 502.6h1M54.3 446.5h1M439.0 491.5h1M322.7 462.8h1M143.0 507.2h1M337.4 486.3h1M144.7 468.4h1M135.4 436.6h1M136.4 489.9h1M424.4 525.4h1M284.0 522.6h1M414.4 501.7h1M467.1 423.1h1M386.3 501.3h1M140.8 487.1h1M407.2 457.3h1M462.8 419.5h1M403.2 424.5h1M444.5 502.1h1M45.3 452.1h1M592.1 433.7h1M194.4 514.1h1M366.5 500.9h1M297.2 506.4h1M55.6 515.3h1M133.8 507.3h1M160.4 504.0h1M218.8 522.6h1M479.0 500.4h1M298.1 524.2h1M153.9 507.9h1M67.8 514.7h1M78.9 511.0h1M209.7 494.9h1M309.6 513.8h1M416.3 514.7h1M184.0 497.0h1M188.5 493.6h1M138.5 516.6h1M229.9 490.3h1M101.6 501.1h1M44.2 504.7h1M580.8 508.8h1M401.3 528.4h1M228.7 491.5h1M83.4 522.7h1M336.1 522.2h1M135.1 491.6h1M281.1 530.0h1M66.9 493.3h1M162.3 513.7h1M262.7 494.2h1M428.4 514.4h1M497.1 506.6h1M386.6 508.2h1M47.7 491.1h1M116.7 511.7h1M158.5 501.7h1M432.3 525.0h1M290.4 500.8h1M390.5 528.1h1M163.2 491.2h1M144.0 512.1h1M397.2 497.6h1M377.2 489.2h1M158.4 514.4h1M348.7 498.5h1M86.9 513.6h1M87.8 530.2h1M388.3 504.9h1M241.4 491.0h1M175.6 507.7h1M308.8 528.7h1M235.9 506.4h1M103.1 499.1h1M207.3 510.0h1M213.8 516.0h1M40.7 515.2h1M302.0 518.3h1M583.6 515.1h1M322.0 531.5h1M79.5 498.2h1M166.1 527.1h1M202.4 521.1h1" stroke="#c2c294" stroke-width="1" fill="none" opacity="0.72"/>
<path d="M212.9 407.9h1M94.9 395.5h1M204.8 353.0h1M192.4 364.2h1M127.2 391.4h1M520.2 378.5h1M53.6 398.1h1M473.9 376.9h1M594.4 346.2h1M127.5 374.5h1M428.8 354.9h1M93.5 363.6h1M284.1 352.8h1M83.3 411.5h1M114.4 367.4h1M603.3 372.8h1M89.9 356.8h1M451.6 340.6h1M563.5 360.1h1M346.4 397.9h1M462.1 386.6h1M115.4 347.0h1M205.8 380.8h1M237.3 355.7h1M474.7 355.9h1M153.0 402.7h1M317.7 359.2h1M89.3 359.0h1M211.1 354.9h1M379.6 357.9h1M195.1 402.6h1M118.0 363.5h1M49.8 250.4h1M292.4 252.3h1M115.0 233.4h1M227.5 319.5h1M106.0 234.8h1M173.6 278.5h1M401.0 233.1h1M53.2 245.2h1M327.6 329.0h1M532.2 320.1h1M142.9 248.3h1M67.4 205.3h1M322.3 240.5h1M495.3 217.8h1M291.6 222.1h1M261.9 305.5h1" stroke="#c8c8c0" stroke-width="1" fill="none" opacity="0.7"/>
<polyline points="38.4,200.0 41.0,193.0 44.0,187.0 45.6,174.0 47.6,157.0 50.0,158.0 51.6,169.0 53.2,179.0 55.6,171.0 59.4,178.6 63.0,175.0 66.0,176.0 68.4,163.0 71.6,169.0 75.0,177.0 78.6,159.0 82.4,157.0 84.4,160.0 87.6,146.0 89.4,160.0 91.4,178.0 94.4,171.0 97.6,161.0 100.0,178.0 103.0,164.4 107.0,164.4 110.0,166.0 115.6,177.0 118.6,173.6 122.0,178.0 125.2,172.4 129.0,183.0 131.4,178.0 134.8,192.0 138.0,167.4 141.2,178.6 144.0,175.0 146.6,171.0 150.6,200.4 153.6,189.0 157.0,189.0 160.4,171.0 163.0,171.0 170.0,188.0 172.4,184.0 176.0,201.0 179.0,172.0 185.0,185.0 188.0,177.0 191.0,179.0 194.0,198.0 197.0,200.0 200.6,186.0 204.0,193.0 207.0,199.0 210.6,194.4 214.0,191.6 216.6,193.0 220.0,187.0 223.0,195.0 226.0,183.0 229.0,182.0 232.0,195.0 235.0,206.0 238.4,182.0 241.4,210.0 244.4,188.0 247.4,192.0 253.0,200.0 257.0,211.6 263.6,188.0 266.6,207.0 270.0,193.0 276.0,210.0 279.0,209.0 282.4,202.4 287.0,208.4 291.0,220.0 297.4,209.0 301.6,213.0 305.0,213.6 307.4,209.6 310.0,215.0 314.0,200.4 317.0,210.0 322.6,228.0 326.0,216.0 329.4,229.6 333.4,227.0 338.6,207.0 342.0,230.0 345.0,235.6 349.0,233.0 354.0,217.0 357.6,224.0 361.0,236.0 364.0,217.0 367.0,233.0 370.0,240.0 373.0,241.0 376.4,226.0 379.0,228.0 382.0,236.0 388.6,223.0 392.4,247.0 394.4,238.0 397.0,237.0 400.6,231.0 405.0,242.0 410.0,243.6 413.0,236.0 417.0,252.0 420.0,241.6 423.0,259.0 426.6,235.0 429.0,252.0 435.0,254.0 439.0,245.0 442.4,255.0 444.4,248.0 449.0,260.0 456.0,259.6 460.0,269.0 464.0,254.4 467.0,261.0 470.0,255.6 473.6,274.0 479.0,269.0 485.0,278.0 488.0,274.0 491.6,265.0 495.0,277.0 498.6,278.0 501.6,306.0 504.6,280.0 507.0,279.0 511.0,272.4 514.0,279.0 517.4,294.0 520.0,288.0 523.4,295.6 529.4,284.4 533.0,293.0 536.0,303.6 539.0,291.0 542.0,297.0 545.0,289.6 549.0,300.0 554.6,314.4 558.0,312.0 561.0,313.0 564.6,306.4 569.0,314.0 575.0,317.0 580.6,328.0 585.0,323.0 592.6,334.0 596.0,334.0 598.6,324.0 601.0,343.0 607.0,344.0 611.0,342.0 615.0,337.4 620.0,346.0 623.8,347.2 627.0,353.2 632.0,346.5 639.5,351.8 646.2,369.0 648.5,366.0 651.5,366.8 654.8,361.5 658.2,372.0 661.2,382.5" fill="none" stroke="#e0841e" stroke-width="1.08" stroke-linejoin="round"/>
<g font-family="Liberation Sans, Arial, sans-serif" fill="#222">
<text x="33.6" y="128.2" text-anchor="end" font-size="8.8">300</text>
<text x="33.6" y="200.8" text-anchor="end" font-size="8.8">250</text>
<text x="33.6" y="273.5" text-anchor="end" font-size="8.8">200</text>
<text x="33.6" y="346.1" text-anchor="end" font-size="8.8">150</text>
<text x="33.6" y="418.7" text-anchor="end" font-size="8.8">100</text>
<text x="33.6" y="491.4" text-anchor="end" font-size="8.8">50</text>
<text x="666.0" y="128.2" text-anchor="start" font-size="8.8">60</text>
<text x="666.0" y="200.8" text-anchor="start" font-size="8.8">50</text>
<text x="666.0" y="273.5" text-anchor="start" font-size="8.8">40</text>
<text x="666.0" y="346.1" text-anchor="start" font-size="8.8">30</text>
<text x="666.0" y="418.7" text-anchor="start" font-size="8.8">20</text>
<text x="666.0" y="491.4" text-anchor="start" font-size="8.8">10</text>
<text x="37.8" y="122.6" text-anchor="start" font-size="8.7">MB/s</text>
<text x="661.5" y="122.6" text-anchor="end" font-size="8.7">ms</text>
<text x="37.3" y="572.4" text-anchor="middle" font-size="8.8">0</text>
<text x="99.8" y="572.4" text-anchor="middle" font-size="8.8">3200</text>
<text x="162.2" y="572.4" text-anchor="middle" font-size="8.8">6400</text>
<text x="224.7" y="572.4" text-anchor="middle" font-size="8.8">9600</text>
<text x="287.1" y="572.4" text-anchor="middle" font-size="8.8">12800</text>
<text x="349.6" y="572.4" text-anchor="middle" font-size="8.8">16000</text>
<text x="412.1" y="572.4" text-anchor="middle" font-size="8.8">19200</text>
<text x="474.5" y="572.4" text-anchor="middle" font-size="8.8">22400</text>
<text x="537.0" y="572.4" text-anchor="middle" font-size="8.8">25600</text>
<text x="599.4" y="572.4" text-anchor="middle" font-size="8.8">28800</text>
<text x="678.2" y="572.4" text-anchor="end" font-size="8.8">32000gB</text>
</g>
</svg>

<!-- right panel -->
<div class="abs" style="left:698px;top:108.5px;width:71px;height:22.5px;box-sizing:border-box;border:1px solid #3b86cf;border-radius:3.5px;background:#f9fbfe;"></div>
<div class="t lbl" style="left:698px;width:71px;text-align:center;top:114px;">开始</div>
<div class="sep" style="top:142px"></div>
<div class="rad" style="top:152px;border:1px solid #7f7f7f;background:#f6f6f6;"></div>
<div class="t lbl" style="left:708px;top:151px;">读取</div>
<div class="rad" style="top:168.5px;border:3.200px solid #1664b8;background:#fff;"></div>
<div class="t lbl" style="left:708px;top:167.500px;">写入</div>
<div class="sep" style="top:184px"></div>
<div class="cb off" style="top:195px"></div>
<div class="t lbl" style="left:708px;top:194px;">短行程</div>
<div class="t" style="left:699px;top:217.500px;font-size:10.2px;color:#8e8e8e;">1000</div>
<div class="abs" style="left:740px;top:213.700px;width:14.500px;height:21.300px;box-sizing:border-box;background:#efefef;border:1px solid #d8d8d8;"></div>
<svg class="abs" style="left:740px;top:213.500px" width="14" height="21" viewBox="0 0 14 21"><path d="M5 7.500l2-2.500 2 2.500zM5 13.500l2 2.500 2-2.500z" fill="#9a9a9a"/></svg>
<div class="t" style="left:766.3px;top:219.3px;font-size:9.8px;color:#222;"><span class="lat">GB</span></div>
<div class="cb on" style="top:248px"></div>
<svg class="abs" style="left:695px;top:248px" width="10" height="10" viewBox="0 0 10 10"><path d="M2.700 5.300l1.700 1.700 3.300-3.500" fill="none" stroke="#fff" stroke-width="0.950"/></svg>
<div class="t lbl" style="left:708px;top:247px;">传输速率</div>
<div class="sep" style="top:261.500px"></div>
<div class="t lbl" style="left:695px;top:266px;">最小</div>
<div class="blk" style="top:281px;color:#1ea6ee;">121.8 MB/s</div>
<div class="t lbl" style="left:695px;top:301.500px;">最大</div>
<div class="blk" style="top:316.200px;color:#1ea6ee;">285.9 MB/s</div>
<div class="t lbl" style="left:695px;top:334px;">平均</div>
<div class="blk" style="top:349.500px;color:#1ea6ee;">221.7 MB/s</div>
<div class="sep" style="top:373px"></div>
<div class="cb on" style="top:382px"></div>
<svg class="abs" style="left:695px;top:382px" width="10" height="10" viewBox="0 0 10 10"><path d="M2.700 5.300l1.700 1.700 3.300-3.500" fill="none" stroke="#fff" stroke-width="0.950"/></svg>
<div class="t lbl" style="left:708px;top:381px;">访问时间</div>
<div class="blk" style="top:396px;color:#e4e62a;">5.55 ms</div>
<div class="cb on" style="top:419px"></div>
<svg class="abs" style="left:695px;top:419px" width="10" height="10" viewBox="0 0 10 10"><path d="M2.700 5.300l1.700 1.700 3.300-3.500" fill="none" stroke="#fff" stroke-width="0.950"/></svg>
<div class="t lbl" style="left:708px;top:418px;">突发速率</div>
<div class="blk" style="top:433.200px;">289.1 MB/s</div>
<div class="t lbl" style="left:695px;top:453.500px;"><span class="lat">CPU</span> 使用率</div>
<div class="blk" style="top:468.500px;">1.4%</div>
<div class="t lbl" style="left:695px;top:500.500px;">通过次数</div>
<div class="abs" style="left:695.500px;top:516px;width:61px;height:20px;box-sizing:border-box;background:#fff;border-bottom:1px solid #8a8a8a;border-radius:2px;"></div>
<div class="t" style="left:699px;top:519px;font-size:10.200px;color:#222;">1</div>
<div class="abs" style="left:756.500px;top:515.500px;width:13px;height:20.500px;box-sizing:border-box;background:#f2f2f2;border:1px solid #cfcfcf;"></div>
<svg class="abs" style="left:756.500px;top:515.500px" width="13" height="21" viewBox="0 0 13 21"><path d="M4.300 7.300l2.200-2.600 2.200 2.600zM4.300 13.300l2.200 2.600 2.200-2.600z" fill="#333"/><path d="M0 10.300h13" stroke="#cfcfcf" stroke-width="0.800"/></svg>
<div class="abs" style="left:695.500px;top:545px;width:51px;height:13px;background:#0f7c10;"></div>
<div class="t" style="left:752px;top:546px;font-size:10.200px;color:#222;"><span class="lat">1/1</span></div>
</body>
</html>
